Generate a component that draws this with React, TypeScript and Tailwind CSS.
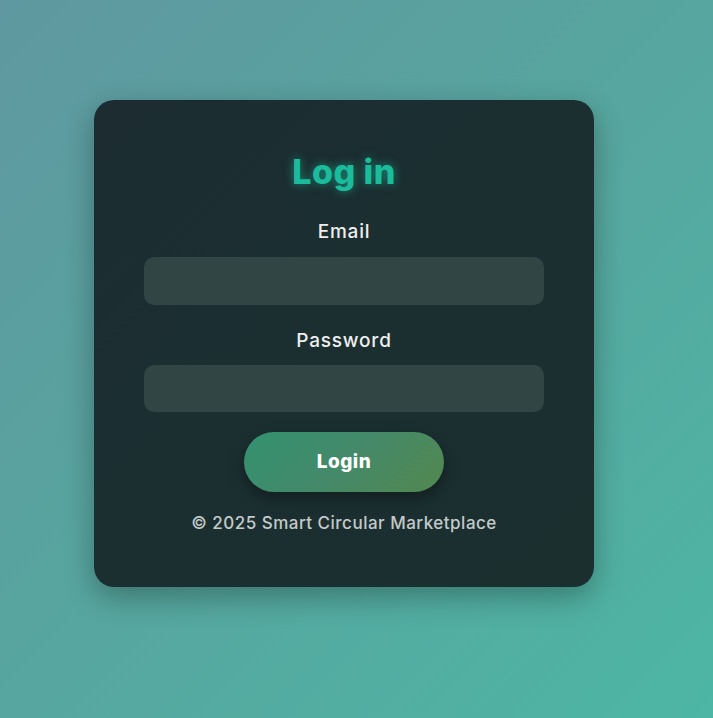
import React from "react";

export default function App() {
  return (
    <div
      className="min-h-[718px] w-full bg-[linear-gradient(135deg,#5f98a0_0%,#57a69f_50%,#4db6a4_100%)] pt-[100px] pl-[94px]"
      style={{ fontFamily: "Inter, 'Open Sans', sans-serif" }}
    >
      <div className="flex w-[500px] h-[487px] flex-col items-center rounded-[20px] bg-[linear-gradient(135deg,#1c2c30_0%,#1b2f31_50%,#1b2f2f_100%)] px-[50px] pt-[48px] shadow-[0_10px_30px_rgba(0,0,0,0.3)]">
        <h1 className="text-[34px] leading-[48px] font-extrabold text-[#1abc9c] tracking-[0.5px] [text-shadow:0_0_10px_rgba(26,188,156,0.65)]">
          Log in
        </h1>
        <label className="mt-[22px] text-[19px] leading-[27px] font-medium tracking-[0.8px] text-[#eeeeee]">Email</label>
        <div className="mt-[12px] h-[48px] w-full rounded-[10px] bg-[#314545]" />
        <label className="mt-[22px] text-[19px] leading-[27px] font-medium tracking-[0.8px] text-[#eeeeee]">Password</label>
        <div className="mt-[11px] h-[47px] w-full rounded-[10px] bg-[#314545]" />
        <button className="mt-[20px] h-[60px] w-[200px] rounded-full bg-[linear-gradient(135deg,#33916f_0%,#44896a_50%,#53884f_100%)] text-[19px] font-extrabold tracking-[0.5px] text-white shadow-[0_6px_16px_rgba(0,0,0,0.35)]">
          Login
        </button>
        <p className="mt-[19px] text-[17px] leading-[24px] font-medium tracking-[0.5px] text-[#c3caca]">© 2025 Smart Circular Marketplace</p>
      </div>
    </div>
  );
}
